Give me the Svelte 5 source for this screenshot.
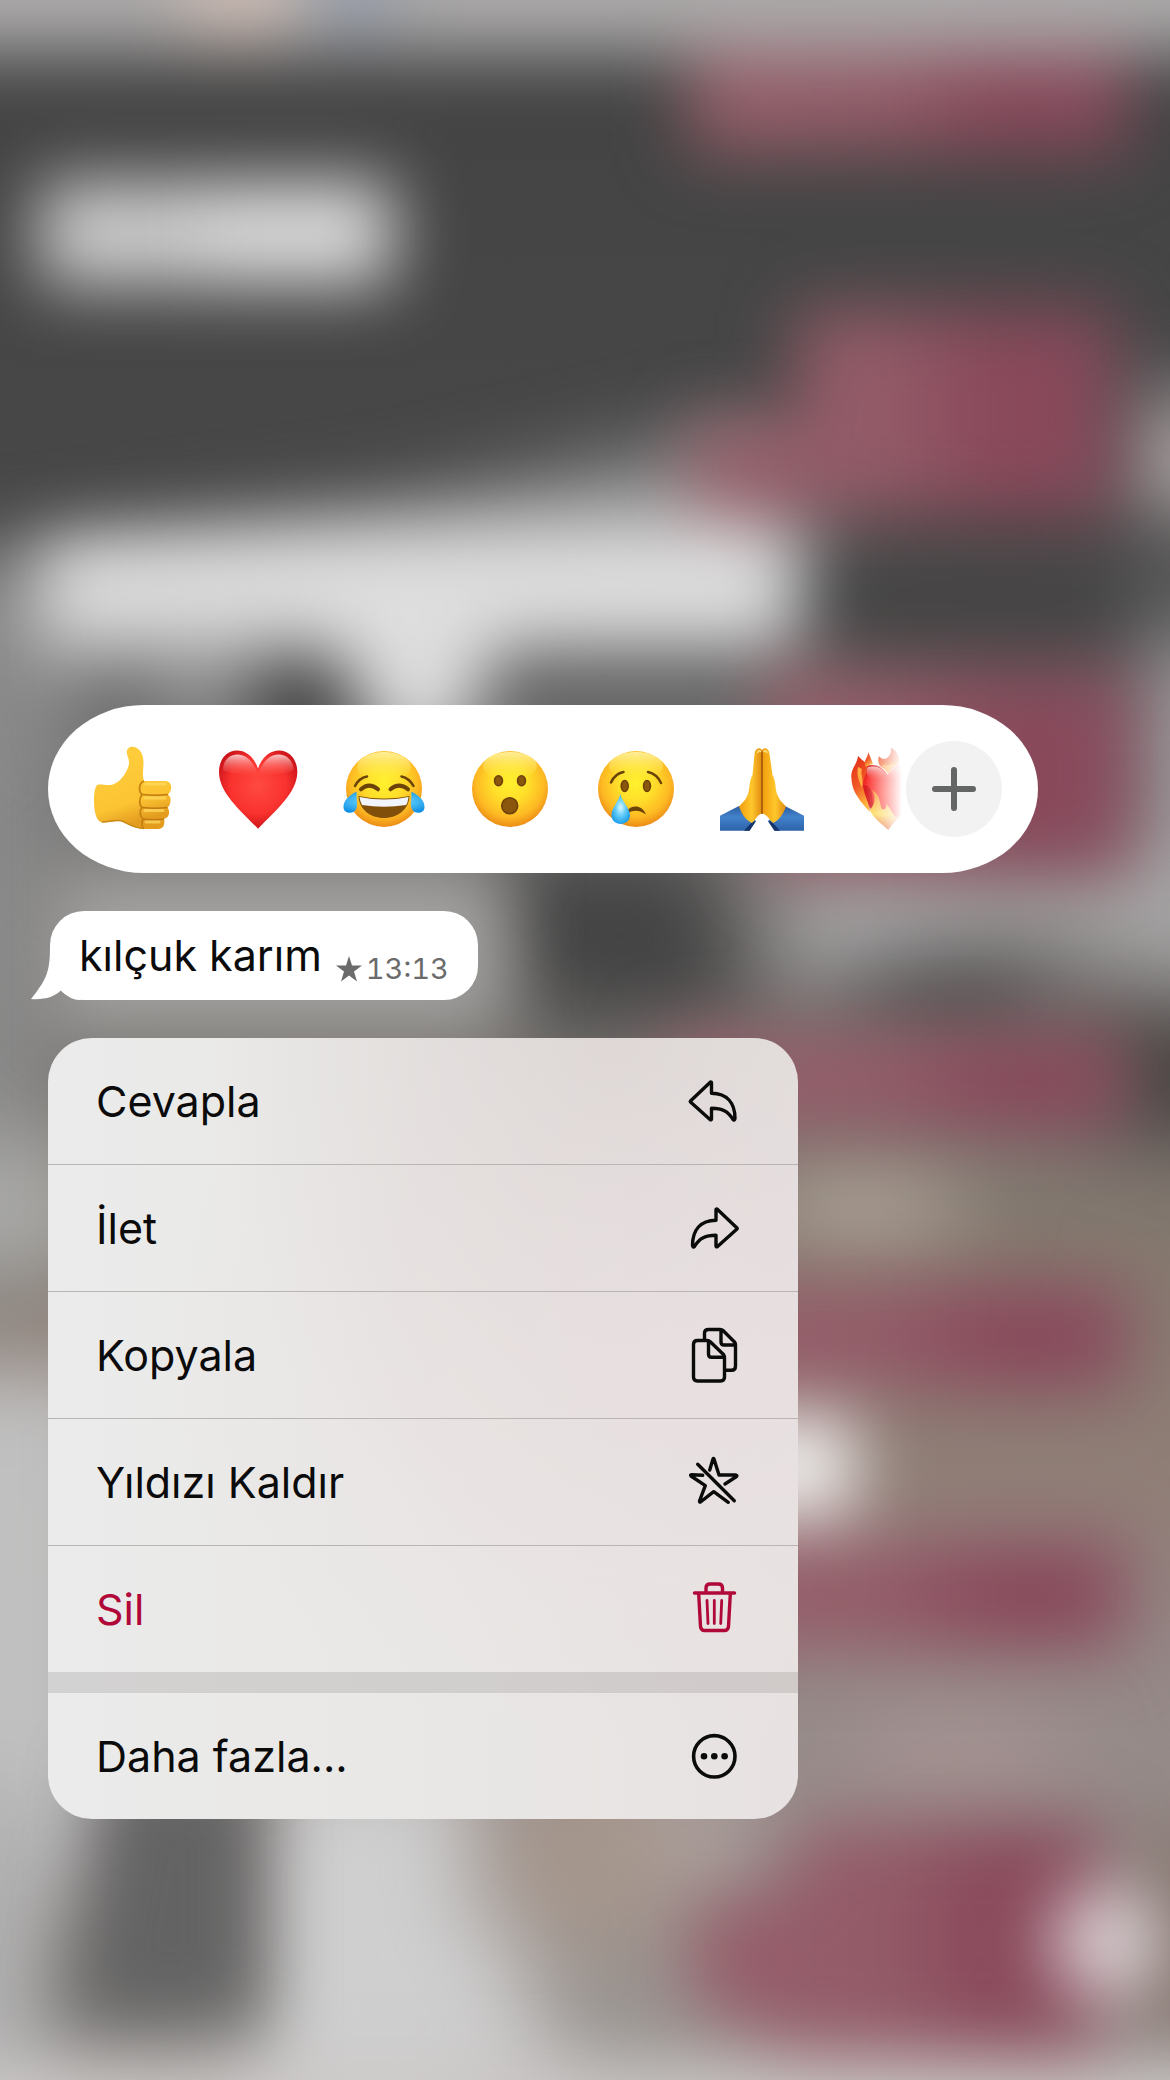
<script>
  const reactions = [
    { id: 'thumb', label: 'Beğen' },
    { id: 'heart', label: 'Kalp' },
    { id: 'laugh', label: 'Gülmekten ağlayan' },
    { id: 'wow', label: 'Şaşkın' },
    { id: 'cry', label: 'Üzgün' },
    { id: 'pray', label: 'Teşekkürler' },
    { id: 'fire', label: 'Yanan kalp' }
  ];
  const actions = [
    { id: 'reply', label: 'Cevapla' },
    { id: 'forward', label: 'İlet' },
    { id: 'copy', label: 'Kopyala' },
    { id: 'unstar', label: 'Yıldızı Kaldır' },
    { id: 'trash', label: 'Sil', danger: true },
    { id: 'more', label: 'Daha fazla...', separate: true }
  ];
</script>

<main class="screen">
  <svg class="wallpaper" viewBox="0 0 882 1568" preserveAspectRatio="none" aria-hidden="true">
    <defs>
      <filter id="soft" x="-200" y="-200" width="1300" height="2000" filterUnits="userSpaceOnUse" color-interpolation-filters="sRGB"><feGaussianBlur stdDeviation="26" /></filter>
      <filter id="wide" x="-200" y="-200" width="1300" height="2000" filterUnits="userSpaceOnUse" color-interpolation-filters="sRGB"><feGaussianBlur stdDeviation="32" /></filter>
      <linearGradient id="base" x1="0" y1="0" x2="0" y2="1">
        <stop offset="0" stop-color="#434343" />
        <stop offset=".25" stop-color="#484848" />
        <stop offset=".36" stop-color="#777" />
        <stop offset=".5" stop-color="#777370" />
        <stop offset=".6" stop-color="#85796f" />
        <stop offset=".72" stop-color="#917f78" />
        <stop offset=".8" stop-color="#958887" />
        <stop offset="1" stop-color="#9b9793" />
      </linearGradient>
      <linearGradient id="rose" gradientUnits="userSpaceOnUse" x1="520" y1="0" x2="850" y2="0">
        <stop offset="0" stop-color="#965f6a" />
        <stop offset=".45" stop-color="#935b68" />
        <stop offset=".7" stop-color="#89485a" />
        <stop offset="1" stop-color="#884b5d" />
      </linearGradient>
    </defs>
    <rect width="882" height="1568" fill="url(#base)" />
    <g filter="url(#wide)">
      <path d="M-80 430L300 385L560 325L640 390L600 480H390L310 540H-80z" fill="#949494" />
      <rect x="-80" y="420" width="120" height="560" fill="#8a8a8a" />
      <rect x="-80" y="860" width="150" height="100" fill="#a9a9a7" />
      <rect x="-80" y="1030" width="170" height="400" fill="#c0c0c0" />
      <rect x="-80" y="1350" width="120" height="300" fill="#b0b0b0" />
      <rect x="190" y="1330" width="165" height="330" fill="#cfcfcf" />
      <path d="M350 1450H385L430 1600H340z" fill="#cdcccc" />
      <path d="M370 640H530L570 770H400z" fill="#434343" />
      <rect x="845" y="300" width="120" height="90" fill="#aaa4a4" />
      <rect x="855" y="490" width="110" height="220" fill="#9c9a9b" />
      <path d="M590 640H930V755L780 700L590 745z" fill="#a8a7a7" />
      <ellipse cx="712" cy="750" rx="80" ry="28" fill="#474545" />
      <ellipse cx="890" cy="810" rx="70" ry="50" fill="#454240" />
      <ellipse cx="650" cy="910" rx="80" ry="34" fill="#ada297" />
      <ellipse cx="450" cy="1400" rx="75" ry="70" fill="#a5968c" />
      <ellipse cx="530" cy="1385" rx="35" ry="45" fill="#b0a3a0" />
      <ellipse cx="720" cy="1320" rx="90" ry="26" fill="#aa9594" />
      <rect x="840" y="1380" width="100" height="170" fill="#85766f" />
    </g>
    <g filter="url(#soft)">
      <rect x="-80" y="-80" width="1040" height="120" fill="#acaaaa" />
      <ellipse cx="180" cy="-4" rx="46" ry="34" fill="#d0beb6" />
      <ellipse cx="268" cy="-4" rx="28" ry="30" fill="#929cae" />
      <rect x="30" y="137" width="122" height="78" fill="#cecece" />
      <rect x="152" y="137" width="144" height="78" fill="#dcdcdc" />
      <path d="M30 410L280 400L560 394L596 416V484H370L345 560H295L240 484H30z" fill="#dedede" />
      <ellipse cx="230" cy="536" rx="42" ry="44" fill="#424242" />
      <ellipse cx="90" cy="536" rx="26" ry="32" fill="#666" />
      <rect x="390" y="508" width="190" height="60" fill="#646464" />
      <rect x="622" y="408" width="228" height="86" fill="#454444" />
      <g fill="url(#rose)">
        <rect x="520" y="42" width="330" height="72" />
        <path d="M600 234H840V388H520V318H600z" />
        <rect x="575" y="506" width="280" height="152" />
        <rect x="500" y="778" width="348" height="74" />
        <rect x="500" y="968" width="350" height="80" />
        <rect x="500" y="1162" width="348" height="80" />
        <path d="M605 1374H832V1548H600L520 1510V1440L590 1420z" />
      </g>
      <rect x="40" y="655" width="340" height="122" fill="#a3a2a0" />
      <rect x="550" y="1068" width="94" height="76" fill="#f2f0ef" />
      <path d="M80 1330H198V1530H46z" fill="#636363" />
      <ellipse cx="834" cy="1464" rx="42" ry="42" fill="#dacfd2" />
      <rect x="-80" y="1556" width="1040" height="90" fill="#cdc9c8" />
    </g>
  </svg>

  <svg class="defs" aria-hidden="true">
    <defs>
      <radialGradient id="face" cx=".5" cy=".42" r=".6">
        <stop offset="0" stop-color="#fff12e" />
        <stop offset=".4" stop-color="#ffde2a" />
        <stop offset=".75" stop-color="#fdb923" />
        <stop offset="1" stop-color="#e98414" />
      </radialGradient>
      <linearGradient id="shine" x1="0" y1="0" x2="0" y2="1">
        <stop offset="0" stop-color="#fff6b0" stop-opacity=".85" />
        <stop offset="1" stop-color="#fff23c" stop-opacity="0" />
      </linearGradient>
      <radialGradient id="tear" cx=".5" cy=".45" r=".65">
        <stop offset="0" stop-color="#d9f7ff" />
        <stop offset=".45" stop-color="#5fcbf8" />
        <stop offset="1" stop-color="#0c8fe4" />
      </radialGradient>
      <radialGradient id="red" cx=".5" cy=".45" r=".6">
        <stop offset="0" stop-color="#ff4a41" />
        <stop offset=".6" stop-color="#f9322e" />
        <stop offset="1" stop-color="#c20d16" />
      </radialGradient>
      <linearGradient id="gloss" x1="0" y1="0" x2="0" y2="1">
        <stop offset="0" stop-color="#fff" stop-opacity=".75" />
        <stop offset="1" stop-color="#ff5a50" stop-opacity="0" />
      </linearGradient>
      <linearGradient id="skin" x1="0" y1="0" x2=".3" y2="1">
        <stop offset="0" stop-color="#ffcf3e" />
        <stop offset=".75" stop-color="#fcc433" />
        <stop offset="1" stop-color="#e39c1e" />
      </linearGradient>
      <linearGradient id="palm" x1="0" y1="0" x2="1" y2="0">
        <stop offset="0" stop-color="#f09c0c" />
        <stop offset=".55" stop-color="#ffc72c" />
        <stop offset="1" stop-color="#e08a10" />
      </linearGradient>
      <linearGradient id="sleeve" x1="0" y1="0" x2="0" y2="1">
        <stop offset="0" stop-color="#2a5c9f" />
        <stop offset=".45" stop-color="#4383cc" />
        <stop offset="1" stop-color="#2c62a8" />
      </linearGradient>
      <linearGradient id="flame" x1="0" y1="0" x2=".3" y2="1">
        <stop offset="0" stop-color="#e02a18" />
        <stop offset=".6" stop-color="#f25a26" />
        <stop offset="1" stop-color="#ffb43c" />
      </linearGradient>
      <linearGradient id="ember" x1="0" y1="0" x2="0" y2="1">
        <stop offset="0" stop-color="#f98b33" />
        <stop offset=".6" stop-color="#ffdc58" />
        <stop offset="1" stop-color="#e0501c" />
      </linearGradient>
    </defs>
  </svg>

  <section class="picker" aria-label="Tepkiler">
    <div class="reactions">
      {#each reactions as r (r.id)}
        <button class="reaction" aria-label={r.label}>
          <svg viewBox="0 0 96 96" aria-hidden="true">
            {#if r.id === 'thumb'}
              <path d="M14 43.5C18 43 24 45 29 43.500C36 41 42 33 44.500 25C46 20 44 17 43 13C42 8 45 5.500 49 5.700C56 6.500 59.500 14 59.500 21C59.500 28 58 34 60 40L82 40Q88 41 87 48Q86.500 52 84 53.500Q87 55.500 86.500 60Q86 65 83.500 66.500Q85.500 69 85 72.500Q84.500 76.500 80 78Q81 82 79.500 85Q78 88 74 88H60C50 87.500 44 83 38 80C33 79 24 82 18 81.500C12 80 10 70 10 60C10 52 11 45 14 43.500z" fill="url(#skin)" />
              <path d="M60 40C55 42 54 50 58 53.500C55 57 55 64 58 66.500C55 70 56 76 59 78C57 82 58 86 60 87.500" fill="none" stroke="#c58212" stroke-width="1.800" />
              <path d="M58 53.500Q71 55 84 53.500M58 66.500Q71 68 83.500 66.500M59 78Q70 79.500 80 78" fill="none" stroke="#c07a12" stroke-width="1.600" />
              <path d="M62 43H81M61 57H81M61 69.500H79M62 81H75" stroke="#ffdb62" stroke-width="3" stroke-linecap="round" opacity=".7" />
              <path d="M18 81C24 81 33 78 38 80C44 83 50 87 60 87.500" fill="none" stroke="#c98a16" stroke-width="1.500" />
            {:else if r.id === 'heart'}
              <path d="M48 27.500C44 16 36 9.500 27 9.500C16 9.500 9 19 9 31C9 52 31 70 48 87.700C65 70 87.300 52 87.300 31C87.300 19 80 9.500 69 9.500C60 9.500 52 16 48 27.500z" fill="url(#red)" />
              <path d="M48 33C44 22 37 13.500 27.500 13.500C19 13.500 13 20 13 29C20 34 40 32 48 36C56 32 76 34 83.500 29C83.500 20 77 13.500 68.500 13.500C59 13.500 52 22 48 33z" fill="url(#gloss)" />
            {:else if r.id === 'laugh'}
              <circle cx="48" cy="48" r="38" fill="url(#face)" />
              <ellipse cx="48" cy="26" rx="27" ry="15" fill="url(#shine)" />
              <path d="M19 45Q23 37 31 35.500M65.500 35.500Q73 37 77.500 45" fill="none" stroke="#6b4309" stroke-width="2.500" stroke-linecap="round" />
              <path d="M25 48.300Q33 41 42 48.300M54.500 48.300Q63 41 72 48.300" fill="none" stroke="#6b4309" stroke-width="4" stroke-linecap="round" />
              <path d="M22.500 55Q48 60 73.500 55C73 68 62 77 48 77C34 77 23 68 22.500 55z" fill="#80500b" />
              <path d="M23.500 56Q48 61 72.500 56C72 60 71 63 70 64Q48 67.500 26 64Q24 60 23.500 56z" fill="#f2f4fb" />
              <path d="M20.700 50.700C13 54 7 60 7.500 66.500C8 73 18 74 20.500 67C22 62 20 56 20.700 50.700zM75.300 50.700C83 54 89 60 88.500 66.500C88 73 78 74 75.500 67C74 62 76 56 75.300 50.700z" fill="url(#tear)" />
            {:else if r.id === 'wow'}
              <circle cx="48" cy="48" r="38" fill="url(#face)" />
              <ellipse cx="48" cy="25" rx="27" ry="14" fill="url(#shine)" />
              <g fill="#8a550c" stroke="#6b4009" stroke-width="1.500">
                <ellipse cx="36.500" cy="39.700" rx="4" ry="5" />
                <ellipse cx="59.500" cy="39.700" rx="4" ry="5" />
                <circle cx="47.700" cy="64.700" r="8" />
              </g>
            {:else if r.id === 'cry'}
              <circle cx="48" cy="48" r="38" fill="url(#face)" />
              <ellipse cx="48" cy="25" rx="27" ry="14" fill="url(#shine)" />
              <path d="M23 41.500Q27 32.500 35.500 31M60 31Q69 33 73 42" fill="none" stroke="#6b4309" stroke-width="2.500" stroke-linecap="round" />
              <g fill="#8a550c" stroke="#6b4009" stroke-width="1.500">
                <ellipse cx="36.700" cy="45" rx="3.500" ry="5.500" />
                <ellipse cx="59" cy="45" rx="3.500" ry="5.500" />
              </g>
              <path d="M40 68.500C45 64 54 64 58 73.500C52 69 46 68.500 40 72z" fill="#6b4309" />
              <path d="M32.300 53C34 61 42 67 42 74C42 79.500 38 83 32.700 83C27.500 83 23.500 79.500 23.500 74C23.500 67 30.500 61 32.300 53z" fill="url(#tear)" />
            {:else if r.id === 'pray'}
              <path d="M6 74.700L25 65L42 80L35.500 89.700H6z" fill="url(#sleeve)" />
              <path d="M90 74.700L71 65L54 80L60.500 89.700H90z" fill="url(#sleeve)" />
              <path d="M38 81L42 80L35.500 89.700H30zM58 81L54 80L60.500 89.700H66z" fill="#14356c" />
              <path d="M48 9C45 5.500 41 7.500 40.500 13L38.500 34C35 40 36 47 34 53C32 59 28 62 25 65.500C28 74 33 80 38 82C42 79 41 76 48 72z" fill="url(#palm)" />
              <path d="M48 9C51 5.500 55 7.500 55.500 13L58.500 34C62 40 61 47 63 53C65 59 69 62 72 65.500C69 74 64 80 59 82C55 79 56 76 48 72z" fill="url(#palm)" />
              <path d="M48 10V73" stroke="#a95f0b" stroke-width="1.800" />
              <path d="M43.500 12Q45 8 47 11M49.500 11Q51.500 8 53 12" stroke="#ffe58a" stroke-width="1.500" fill="none" />
            {:else}
              <path d="M19 48C9 36 20 24 32 24C40 24 45 29 47.500 34C52 27 58 23 66 24C90 28 86 52 48 87C36 74 26 62 19 48z" fill="url(#red)" />
              <path d="M18 46Q28 40 32 52L34 72L26 64z" fill="#c5121a" opacity=".6" />
              <path d="M47 34C43 27 36 24 28 26C24 30 27 34 31 38Q42 42 58 36L66 25C58 24 51 28 47 34z" fill="url(#gloss)" />
              <path d="M18 15C17 24 10 28 11.500 38C12 48 16 56 30 71C29 61 24 54 23 45C22 37 30 30 26 22Q22 19 18 15z" fill="url(#flame)" />
              <path d="M28 10.700C29 16 22 20 26 26Q30 23 33 23Q31 17 28 10.700z" fill="url(#flame)" />
              <path d="M39 15C43 21 52 17 51 6.700C58 10 61 18 58 24Q52 26 48 33Q46 28 40 25Q37 20 39 15z" fill="url(#flame)" />
              <path d="M18 26C16 35 20 42 22 47C24 38 20 32 22 28M42 24Q46 28 48 33Q52 26 55 22Q49 25 42 24" fill="#ffae45" />
              <path d="M32 49C41 54 39 62 42 68C45 69 47 67 46 63C53 69 52 76 58 76L48.300 89C42 83 32 76 30 69C34 64 37 58 32 49z" fill="url(#ember)" />
            {/if}
          </svg>
        </button>
      {/each}
    </div>
    <button class="plus" aria-label="Daha fazla tepki">
      <svg viewBox="0 0 48 48" aria-hidden="true"><path d="M24 5V43M5 24H43" stroke="#646665" stroke-width="6" stroke-linecap="round" /></svg>
    </button>
  </section>

  <article class="bubble">
    <svg class="tail" viewBox="0 0 50 66" aria-hidden="true">
      <path d="M19 11C19 36 17 44 0 65C13 66 24 63 30 56Q38 66 50 66V11z" fill="#fff" />
    </svg>
    <span class="message">kılçuk karım</span>
    <span class="meta">
      <svg viewBox="0 0 26 26" aria-hidden="true"><path d="M13 0L16 9.500H26L18 15.500L21 25.500L13 19.500L5 25.500L8 15.500L0 9.500H10z" fill="#6b6b6b" /></svg>
      <time datetime="13:13">13:13</time>
    </span>
  </article>

  <nav class="menu" aria-label="Mesaj seçenekleri">
    {#each actions as a (a.id)}
      <button class="action" class:danger={a.danger} class:separate={a.separate}>
        <span>{a.label}</span>
        <svg viewBox="0 0 60 60" fill="none" stroke="currentColor" stroke-width="3.4" stroke-linecap="round" stroke-linejoin="round" aria-hidden="true">
          {#if a.id === 'reply'}
            <path d="M6.500 30L26.500 11Q27.500 11 27.500 12V22.300C43 22.500 51 32 51 47.500Q50.500 50 49 48.500C44 40 38 37.300 27.500 37.300V48Q27.500 49.500 26 48.500L6.500 31Q6 30.500 6.500 30z" />
          {:else if a.id === 'forward'}
            <path d="M53 30L33 11Q32 11 32 12V22.300C16.500 22.500 8.500 32 8.500 47.500Q9 50 10.500 48.500C15.500 40 21.500 37.300 32 37.300V48Q32 49.500 33.500 48.500L53 31Q53.500 30.500 53 30z" />
          {:else if a.id === 'copy'}
            <path d="M20.500 14V8Q20.500 4.500 24.500 4.500H36Q38 4.500 39 5.500L50.500 17Q51.500 18 51.500 20V41Q51.500 45.300 47.500 45.300H42M37 5V17Q37 20 40 20H51" />
            <path d="M13.500 15.500H23Q25 15.500 26.500 17L39.500 29.500Q40.500 31 40.500 33V52Q40.500 56 36.500 56H13.500Q9.500 56 9.500 52V19.500Q9.500 15.500 13.500 15.500zM24.500 16V29Q24.500 32.300 27.500 32.300H40" />
          {:else if a.id === 'unstar'}
            <path d="M25.700 18L29 7Q29.500 6 30 7L35 23H52Q53.500 23.500 52.500 24.500L41 32M13.700 12.300L50.300 48.700M44.300 50.300L29.700 39.700L16.500 50Q15.500 50.500 15.500 49L21.300 33.700L7 24Q6 22.800 7.500 22.700L18.700 23.300" />
          {:else if a.id === 'trash'}
            <path d="M10.500 14H50.500M22 14V9Q22 5 26 5H34.500Q38.500 5 38.500 9V14M14.700 15L16.500 47.500Q17 51.500 20.500 51.500H40.500Q44 51.500 44.500 47.500L46.300 15" />
            <path d="M23 21.500L24 44.500M30.300 21.500V44.500M37.700 21.500L36.700 44.500" stroke-width="2.800" />
          {:else}
            <circle cx="30.300" cy="30.300" r="20.700" stroke-width="3.600" />
            <g fill="currentColor" stroke="none"><circle cx="20" cy="30.300" r="3.300" /><circle cx="30.300" cy="30.300" r="3.300" /><circle cx="40.600" cy="30.300" r="3.300" /></g>
          {/if}
        </svg>
      </button>
    {/each}
  </nav>
</main>

<style>
  :global(body) {
    margin: 0;
    background: #777;
  }
  .screen {
    position: relative;
    box-sizing: border-box;
    min-height: 100vh;
    padding: 705px 48px 48px;
    overflow: hidden;
    display: flex;
    flex-direction: column;
    align-items: flex-start;
    gap: 38px;
    font-family: Inter, "Liberation Sans", sans-serif;
    color: #0b0b0b;
  }
  .wallpaper {
    position: absolute;
    inset: 0;
    width: 100%;
    height: 100%;
    z-index: -1;
  }
  .defs {
    position: absolute;
    width: 0;
    height: 0;
  }
  button {
    border: 0;
    margin: 0;
    padding: 0;
    background: none;
    font: inherit;
    color: inherit;
    cursor: pointer;
  }
  .picker {
    box-sizing: border-box;
    width: 100%;
    max-width: 990px;
    height: 168px;
    padding: 0 36px 0 21px;
    border-radius: 96px / 84px;
    background: #fff;
    display: flex;
    align-items: center;
    gap: 4px;
  }
  .reactions {
    flex: 1;
    min-width: 0;
    display: flex;
    overflow: hidden;
    mask-image: linear-gradient(to right, #000 calc(100% - 36px), transparent);
  }
  .reaction {
    flex: 0 0 126px;
    display: flex;
    justify-content: center;
  }
  .reaction svg {
    width: 96px;
    height: 96px;
  }
  .plus {
    flex: none;
    width: 96px;
    height: 96px;
    border-radius: 50%;
    background: #f2f2f2;
    display: grid;
    place-items: center;
  }
  .plus svg {
    width: 48px;
    height: 48px;
  }
  .bubble {
    position: relative;
    box-sizing: border-box;
    height: 89px;
    margin-left: 2px;
    padding: 0 29px;
    border-radius: 34px;
    background: #fff;
    display: flex;
    gap: 14px;
    line-height: 88px;
  }
  .tail {
    position: absolute;
    left: -19px;
    bottom: 0;
    width: 50px;
    height: 66px;
  }
  .message {
    position: relative;
    font-size: 43px;
  }
  .meta {
    display: flex;
    align-items: center;
    gap: 4px;
    padding-top: 26px;
    line-height: 62px;
    font-size: 29px;
    font-variant-numeric: tabular-nums;
    color: #6b6b6b;
  }
  .meta svg {
    width: 26px;
    height: 26px;
  }
  .menu {
    width: 100%;
    max-width: 750px;
    border-radius: 44px;
    overflow: hidden;
    background:
      radial-gradient(ellipse at 85% 42%, rgba(234, 224, 225, 0.7), transparent 60%),
      radial-gradient(ellipse at 75% 0%, rgba(220, 213, 212, 0.9), transparent 50%),
      linear-gradient(to right, #ebebeb, #e9e8e6 45%, #e7e2e1);
  }
  .action {
    box-sizing: content-box;
    width: 100%;
    height: 126px;
    display: flex;
    align-items: center;
    justify-content: space-between;
    font-size: 43px;
    text-align: left;
  }
  .action + .action {
    border-top: 1px solid #b9b5b5;
  }
  .action.action.separate {
    border-top: 21px solid rgba(90, 80, 80, 0.16);
  }
  .action span {
    padding-left: 48px;
  }
  .action svg {
    width: 60px;
    height: 60px;
    margin-right: 54px;
  }
  .danger {
    color: #b00838;
  }
</style>
